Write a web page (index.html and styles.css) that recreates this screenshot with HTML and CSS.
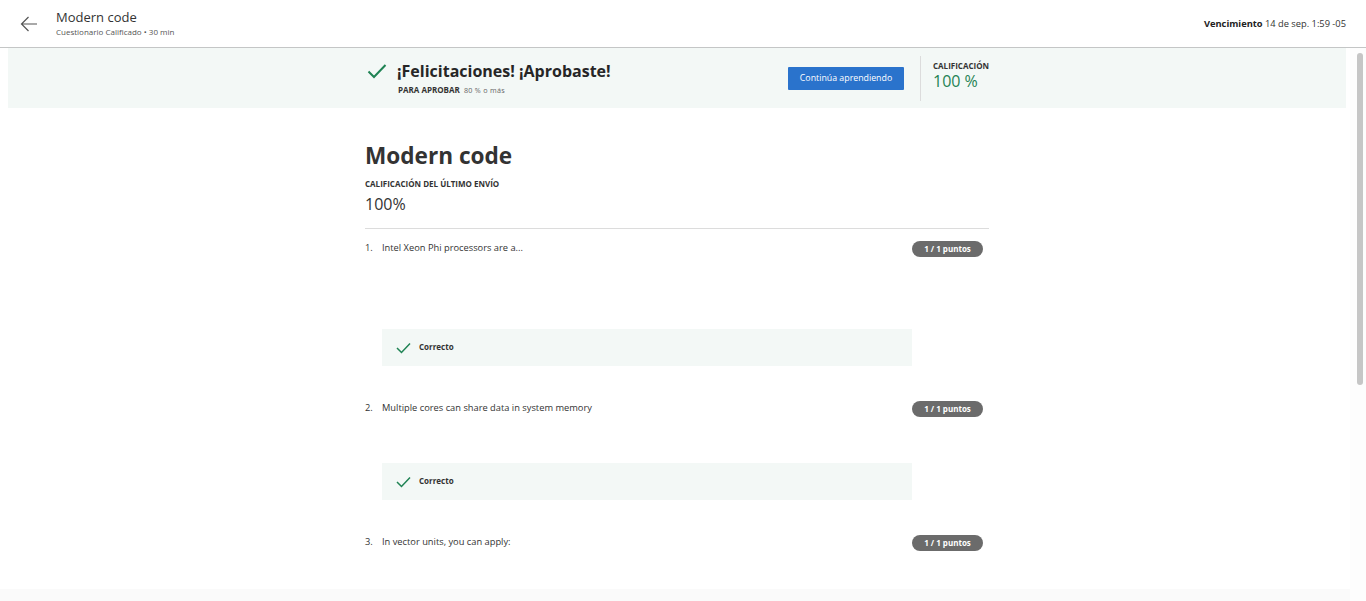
FILE: index.html
```html
<!DOCTYPE html>
<html lang="es">
<head>
<meta charset="utf-8">
<title>Modern code</title>
<link rel="stylesheet" href="styles.css">
</head>
<body>
<header class="topbar">
  <div class="top-left">
    <svg class="back" width="18" height="16" viewBox="0 0 18 16"><path d="M17 8H1.5M8.5 1L1.5 8l7 7" fill="none" stroke="#555" stroke-width="1.2"/></svg>
    <div class="top-titles">
      <div class="top-title">Modern code</div>
      <div class="top-sub">Cuestionario Calificado • 30 min</div>
    </div>
  </div>
  <div class="due"><b>Vencimiento</b> 14 de sep. 1:59 -05</div>
</header>
<div class="viewport">
  <main class="content">
    <section class="banner">
      <div class="banner-inner">
        <svg class="bigcheck" width="20" height="16" viewBox="0 0 20 16"><path d="M1.5 8.5l5.5 5.5L18.5 2" fill="none" stroke="#1f8354" stroke-width="2"/></svg>
        <div class="pass">
          <div class="pass-title">¡Felicitaciones! ¡Aprobaste!</div>
          <div class="pass-sub"><b>PARA APROBAR</b> <span>80 % o más</span></div>
        </div>
        <button class="btn">Continúa aprendiendo</button>
        <div class="vdiv"></div>
        <div class="grade">
          <div class="grade-label">CALIFICACIÓN</div>
          <div class="grade-val">100 %</div>
        </div>
      </div>
    </section>
    <section class="column">
      <h1 class="title">Modern code</h1>
      <div class="last-label">CALIFICACIÓN DEL ÚLTIMO ENVÍO</div>
      <div class="last-val">100%</div>
      <div class="hr"></div>

      <div class="q q1">
        <div class="qrow"><span class="qn">1.</span><span class="qt">Intel Xeon Phi processors are a...</span><span class="badge">1 / 1 puntos</span></div>
        <div class="spacer1"></div>
        <div class="ok"><svg width="15" height="12" viewBox="0 0 15 12"><path d="M1 6l4.5 4.5L14 1.5" fill="none" stroke="#1f8354" stroke-width="1.5"/></svg><span>Correcto</span></div>
      </div>

      <div class="q">
        <div class="qrow"><span class="qn">2.</span><span class="qt">Multiple cores can share data in system memory</span><span class="badge">1 / 1 puntos</span></div>
        <div class="spacer2"></div>
        <div class="ok"><svg width="15" height="12" viewBox="0 0 15 12"><path d="M1 6l4.5 4.5L14 1.5" fill="none" stroke="#1f8354" stroke-width="1.5"/></svg><span>Correcto</span></div>
      </div>

      <div class="q">
        <div class="qrow"><span class="qn">3.</span><span class="qt">In vector units, you can apply:</span><span class="badge">1 / 1 puntos</span></div>
      </div>
    </section>
  </main>
  <div class="footerband"></div>
  <div class="scrollbar"><div class="thumb"></div></div>
</div>
</body>
</html>
```
FILE: styles.css
```css
* { box-sizing: border-box; }
html, body { margin: 0; padding: 0; height: 100%; overflow: hidden; }
body {
  font-family: "Open Sans", "Noto Sans", sans-serif;
  color: #1f1f1f;
  background: #fff;
}
.topbar {
  height: 48px;
  border-bottom: 1px solid #c4c6c6;
  display: flex;
  align-items: center;
  justify-content: space-between;
  padding: 0 20px 0 20px;
}
.top-left { display: flex; align-items: center; gap: 18px; }
.back { display: block; }
.top-titles { display: flex; flex-direction: column; margin-top: -2px; }
.top-title { font-size: 13px; line-height: 17px; color: #333; }
.top-sub { font-size: 8px; line-height: 10px; color: #555; margin-top: 1px; }
.due { font-size: 9.3px; color: #333; }
.due b { font-weight: 700; color: #222; }

.viewport { position: relative; height: 553px; padding-right: 16px; }
.content { padding: 0 4px 0 8px; }
.banner { background: #f3f8f6; height: 60px; }
.banner-inner {
  width: 624px; margin: 0 auto; height: 60px;
  display: flex; align-items: center;
}
.bigcheck { margin-left: 2px; margin-right: 10px; margin-top: -15px; }
.pass { flex: 1; margin-top: -1px; }
.pass-title { font-size: 16px; font-weight: 700; line-height: 20px; color: #262626; }
.pass-sub { font-size: 8px; line-height: 10px; margin-top: 4px; padding-left: 1px; }
.pass-sub b { font-weight: 700; color: #333; }
.pass-sub span { font-size: 7.2px; letter-spacing: 0.3px; color: #666; margin-left: 2px; }
.btn {
  width: 116px; height: 23px; background: #2a73cc; color: #fff;
  border: 0; border-radius: 1px; font-family: inherit; font-size: 8.8px;
  padding: 0; margin-top: 0;
}
.vdiv { width: 1px; height: 45px; background: #dcdcdc; margin: 0 12px 0 16px; }
.grade { width: 56px; margin-top: -5px; }
.grade-label { font-size: 8px; font-weight: 700; color: #333; line-height: 10px; }
.grade-val { font-size: 16px; color: #1f8354; line-height: 20px; }

.column { width: 624px; margin: 0 auto; padding-top: 34px; }
.title { font-size: 22.6px; font-weight: 700; margin: 0; line-height: 28px; color: #333; }
.last-label { font-size: 8px; font-weight: 700; color: #333; margin-top: 9px; line-height: 10px; }
.last-val { font-size: 16px; color: #333; line-height: 22px; margin-top: 4px; }
.hr { height: 1px; background: #dcdcdc; margin-top: 13px; }

.qrow {
  display: flex; align-items: center; height: 16px; padding-right: 6px;
  font-size: 9.3px; color: #333;
}
.qn, .qt { position: relative; top: -2px; }
.q1 .qrow { margin-top: 12px; }
.q + .q .qrow { margin-top: 35px; }
.qn { width: 17px; }
.qt { flex: 1; }
.badge {
  width: 71px; height: 16px; border-radius: 8px; background: #6b6b6b;
  color: #fff; font-size: 8px; font-weight: 700; text-align: center; line-height: 16px;
}
.spacer1 { height: 72px; }
.spacer2 { height: 46px; }
.ok {
  margin-left: 17px; width: 530px; height: 37px; background: #f3f8f6;
  display: flex; align-items: center; padding-left: 14px; gap: 8px;
  font-size: 8px; font-weight: 700; color: #333;
}
.ok svg { display: block; }
.ok span { position: relative; top: -1px; }
.footerband { position: absolute; left: 0; right: 16px; bottom: 0; height: 12px; background: #fafafa; }
.scrollbar { position: absolute; top: 0; right: 0; width: 16px; height: 100%; background: #fdfdfd; }
.thumb { position: absolute; left: 7px; top: 5px; width: 6px; height: 332px; border-radius: 3px; background: #c6c6c6; }
```
